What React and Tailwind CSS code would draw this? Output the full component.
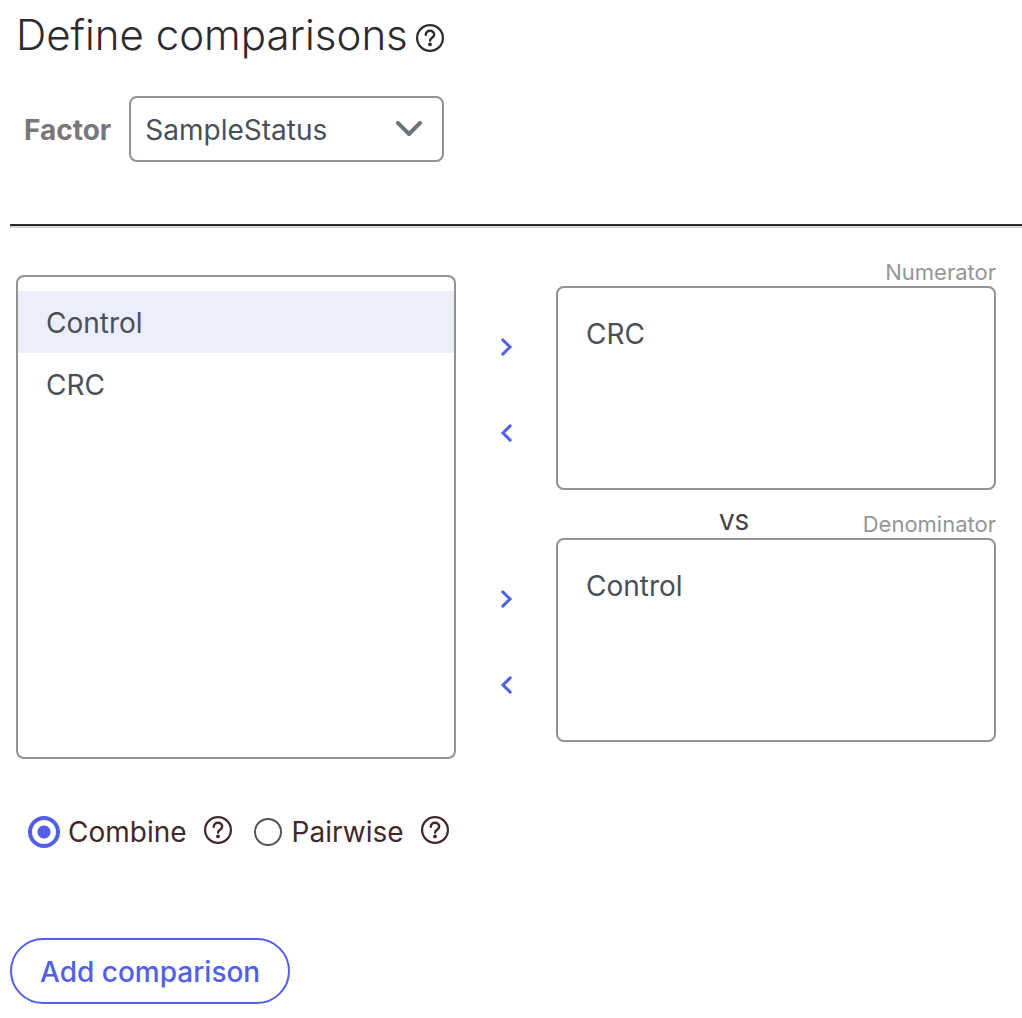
import React, { useState } from 'react';

const LEVELS = ["Control", "CRC"];

function HelpIcon({ className }) {
  return (
    <svg viewBox="0 0 28 28" fill="none" className={className}>
      <circle cx="14" cy="14" r="12.9" stroke="currentColor" strokeWidth="2.2" />
      <path d="M9.8 10.7c0-2.3 1.8-3.9 4.2-3.9s4.2 1.6 4.2 3.8c0 3.1-4.1 3.1-4.1 5.9" stroke="currentColor" strokeWidth="2.4" strokeLinecap="round" />
      <circle cx="14" cy="20.4" r="1.9" fill="currentColor" />
    </svg>
  );
}

function MoveButton({ label, direction, onClick }) {
  return (
    <button type="button" aria-label={label} onClick={onClick} className="flex h-10 w-10 items-center justify-center text-[#5260e8]">
      <svg width="12" height="18" viewBox="0 0 12 18" fill="none" stroke="currentColor" strokeWidth="3" strokeLinecap="round">
        <path d={direction === "right" ? "M2.8 1.9L10 9L2.8 16.1" : "M10.2 1.9L3 9L10.2 16.1"} />
      </svg>
    </button>
  );
}

function MoveButtons({ target, onAdd, onRemove }) {
  return (
    <div className="flex h-[232px] flex-col items-center gap-[46px] pt-[69px]">
      <MoveButton label={`Add to ${target}`} direction="right" onClick={onAdd} />
      <MoveButton label={`Remove from ${target}`} direction="left" onClick={onRemove} />
    </div>
  );
}

function Group({ title, items, children }) {
  return (
    <section aria-label={title}>
      <div className="grid h-7 grid-cols-[1fr_auto_1fr] items-center text-[22px] leading-6">
        <span />
        <span className="pr-[84px] pb-1 font-medium text-[#424247]">{children}</span>
        <h2 className="text-right text-[#969696]">{title}</h2>
      </div>
      <ul className="h-[204px] rounded-lg border-2 border-[#929292] px-7 py-[14px]">
        {items.map(item => (
          <li key={item} className="flex h-[62px] items-center pt-0.5">{item}</li>
        ))}
      </ul>
    </section>
  );
}

function App() {
  const [selected, setSelected] = useState("Control");
  const [numerator, setNumerator] = useState(["CRC"]);
  const [denominator, setDenominator] = useState(["Control"]);
  const [mode, setMode] = useState("combine");

  const add = list => (list.includes(selected) ? list : [...list, selected]);
  const remove = list => list.filter(item => item !== selected);

  return (
    <main className="bg-white pl-[10px] font-['Inter',sans-serif] text-[28px] text-[#495057]">
      <h1 className="flex h-[68px] items-center gap-2 pl-[6px] text-[42px] font-light text-[#2c2b30]">
        Define comparisons
        <button type="button" aria-label="About comparisons" className="pt-2">
          <HelpIcon className="h-7 w-7" />
        </button>
      </h1>

      <div className="mt-7 flex items-center gap-[18px] pl-[14px]">
        <label htmlFor="factor" className="pt-0.5 font-bold text-[#797779]">Factor</label>
        <div className="relative w-[315px]">
          <select id="factor" className="h-[66px] w-full appearance-none rounded-lg border-2 border-[#929292] bg-white px-[14px] pt-0.5">
            <option>SampleStatus</option>
          </select>
          <svg width="26" height="16" viewBox="0 0 26 16" fill="none" className="pointer-events-none absolute top-[25px] right-[22px] text-[#6c757d]">
            <path d="M2 2L13 13L24 2" stroke="currentColor" strokeWidth="3.9" strokeLinecap="round" strokeLinejoin="round" />
          </svg>
        </div>
      </div>

      <hr className="mt-[62px] border-t-2 border-b-2 border-t-[#2c2b30] border-b-[#d4d4d4]" />

      <div className="grid grid-cols-[1fr_100px_1fr] pt-[30px] pr-[26px] pl-[6px]">
        <ul role="listbox" aria-label="Levels" className="mt-[17px] h-[484px] rounded-lg border-2 border-[#929292] py-[14px]">
          {LEVELS.map(level => (
            <li key={level} role="option" aria-selected={selected === level}>
              <button
                type="button"
                onClick={() => setSelected(level)}
                className={`block h-[62px] w-full px-7 pt-0.5 text-left ${selected === level ? "bg-[#eceefc]" : ""}`}
              >
                {level}
              </button>
            </li>
          ))}
        </ul>
        <div className="flex flex-col gap-5">
          <MoveButtons target="numerator" onAdd={() => setNumerator(add)} onRemove={() => setNumerator(remove)} />
          <MoveButtons target="denominator" onAdd={() => setDenominator(add)} onRemove={() => setDenominator(remove)} />
        </div>
        <div className="flex flex-col gap-5">
          <Group title="Numerator" items={numerator} />
          <Group title="Denominator" items={denominator}>VS</Group>
        </div>
      </div>

      <div className="mt-[51px] flex h-11 items-center pl-[18px] text-[#42282b]">
        <input
          id="combine"
          type="radio"
          name="mode"
          checked={mode === "combine"}
          onChange={() => setMode("combine")}
          className="h-8 w-8 appearance-none rounded-full border-2 border-[#555555] checked:border-4 checked:border-[#5260e8] checked:bg-[radial-gradient(circle,#5260e8_6px,transparent_7px)]"
        />
        <label htmlFor="combine" className="ml-2">Combine</label>
        <button type="button" aria-label="About combine" className="ml-[17px] pb-1">
          <HelpIcon className="h-7 w-7" />
        </button>
        <input
          id="pairwise"
          type="radio"
          name="mode"
          checked={mode === "pairwise"}
          onChange={() => setMode("pairwise")}
          className="ml-[22px] h-7 w-7 appearance-none rounded-full border-2 border-[#555555] checked:border-4 checked:border-[#5260e8] checked:bg-[radial-gradient(circle,#5260e8_6px,transparent_7px)]"
        />
        <label htmlFor="pairwise" className="ml-[10px]">Pairwise</label>
        <button type="button" aria-label="About pairwise" className="ml-[17px] pb-1">
          <HelpIcon className="h-7 w-7" />
        </button>
      </div>

      <button type="button" className="mt-[84px] mb-[14px] h-[66px] rounded-full border-2 border-[#5260e8] px-7 pt-0.5 font-medium text-[#5260e8]">
        Add comparison
      </button>
    </main>
  );
}

export default App;
